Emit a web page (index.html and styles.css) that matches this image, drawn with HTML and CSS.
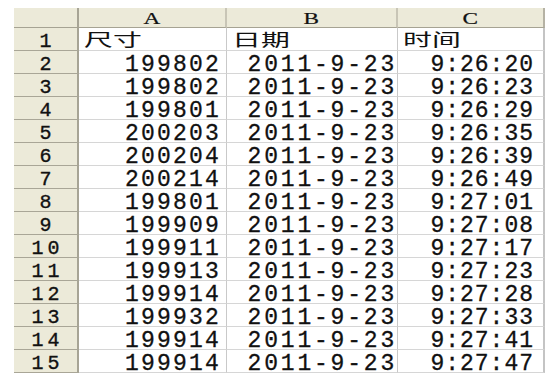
FILE: index.html
```html
<!DOCTYPE html>
<html>
<head>
<meta charset="utf-8">
<link rel="stylesheet" href="styles.css">
</head>
<body>
<div class="sheet">
  <div class="corner"></div>
  <div class="colhead"><span class="letter">A</span></div>
  <div class="colhead"><span class="letter">B</span></div>
  <div class="colhead last"><span class="letter">C</span></div>

  <div class="rowhead">1</div>
  <div class="cell text ca"><span class="cjk">尺寸</span></div>
  <div class="cell text cb"><span class="cjk">日期</span></div>
  <div class="cell text cc"><span class="cjk">时间</span></div>

  <div class="rowhead">2</div><div class="cell num ca">199802</div><div class="cell num cb">2011-9-23</div><div class="cell num cc">9:26:20</div>
  <div class="rowhead">3</div><div class="cell num ca">199802</div><div class="cell num cb">2011-9-23</div><div class="cell num cc">9:26:23</div>
  <div class="rowhead">4</div><div class="cell num ca">199801</div><div class="cell num cb">2011-9-23</div><div class="cell num cc">9:26:29</div>
  <div class="rowhead">5</div><div class="cell num ca">200203</div><div class="cell num cb">2011-9-23</div><div class="cell num cc">9:26:35</div>
  <div class="rowhead">6</div><div class="cell num ca">200204</div><div class="cell num cb">2011-9-23</div><div class="cell num cc">9:26:39</div>
  <div class="rowhead">7</div><div class="cell num ca">200214</div><div class="cell num cb">2011-9-23</div><div class="cell num cc">9:26:49</div>
  <div class="rowhead">8</div><div class="cell num ca">199801</div><div class="cell num cb">2011-9-23</div><div class="cell num cc">9:27:01</div>
  <div class="rowhead">9</div><div class="cell num ca">199909</div><div class="cell num cb">2011-9-23</div><div class="cell num cc">9:27:08</div>
  <div class="rowhead">10</div><div class="cell num ca">199911</div><div class="cell num cb">2011-9-23</div><div class="cell num cc">9:27:17</div>
  <div class="rowhead">11</div><div class="cell num ca">199913</div><div class="cell num cb">2011-9-23</div><div class="cell num cc">9:27:23</div>
  <div class="rowhead">12</div><div class="cell num ca">199914</div><div class="cell num cb">2011-9-23</div><div class="cell num cc">9:27:28</div>
  <div class="rowhead">13</div><div class="cell num ca">199932</div><div class="cell num cb">2011-9-23</div><div class="cell num cc">9:27:33</div>
  <div class="rowhead">14</div><div class="cell num ca">199914</div><div class="cell num cb">2011-9-23</div><div class="cell num cc">9:27:41</div>
  <div class="rowhead">15</div><div class="cell num ca">199914</div><div class="cell num cb">2011-9-23</div><div class="cell num cc">9:27:47</div>
</div>
</body>
</html>
```
FILE: styles.css
```css
html, body {
  margin: 0;
  padding: 0;
  background: #ffffff;
}
body {
  padding: 8px 0 0 14px;
}
.sheet {
  display: grid;
  grid-template-columns: 65px 148px 171px 147px;
  grid-template-rows: 20px;
  grid-auto-rows: 23px;
  width: 531px;
  font-family: "Liberation Mono", "Noto Sans CJK SC", monospace;
  color: #111111;
}
.corner,
.colhead {
  background: #ecead9;
  border-bottom: 1px solid #a6a393;
  box-sizing: border-box;
}
.corner {
  border-right: 2px solid #a7a495;
}
.colhead {
  border-right: 2px solid #c8c5b6;
  text-align: center;
  line-height: 16px;
  padding-top: 3px;
}
.colhead.last {
  border-right: 2px solid #b5b2a4;
}
.letter {
  display: inline-block;
  font-family: "Liberation Serif", serif;
  font-size: 16px;
  -webkit-text-stroke: 0.2px #111111;
  transform: scaleX(1.45);
}
.rowhead {
  background: #ecead9;
  border-right: 2px solid #a7a495;
  border-bottom: 1px solid #a9a697;
  box-sizing: border-box;
  text-align: center;
  font-size: 20px;
  letter-spacing: 4px;
  padding-left: 4px;
  line-height: 15px;
  padding-top: 6px;
  -webkit-text-stroke: 0.35px #111111;
}
.cell {
  border-right: 1px solid #c9c9c9;
  border-bottom: 1px solid #d6d6d6;
  box-sizing: border-box;
  white-space: nowrap;
}
.cell.cc {
  border-right: 2px solid #c4c4c4;
}
.text {
  line-height: 22px;
  padding-left: 5px;
}
.cjk {
  display: inline-block;
  font-family: "Noto Sans CJK SC", sans-serif;
  font-size: 17px;
  line-height: 22px;
  transform: scaleX(1.7);
  transform-origin: left center;
}
.num {
  font-size: 23px;
  line-height: 15px;
  padding-top: 7px;
  text-align: right;
  -webkit-text-stroke: 0.3px #111111;
}
.num.ca {
  letter-spacing: 2.2px;
  padding-right: 5px;
}
.num.cb {
  letter-spacing: 2.8px;
  padding-right: 0;
}
.num.cc {
  letter-spacing: 1px;
  padding-right: 9px;
}
```
